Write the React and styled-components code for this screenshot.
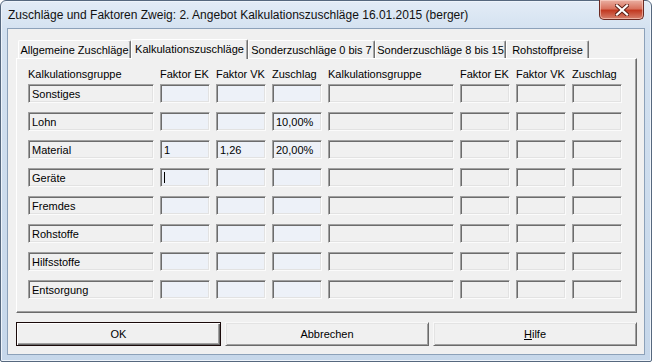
import React from 'react';
import styled, { createGlobalStyle } from 'styled-components';

const Global = createGlobalStyle`
  html, body {
    margin: 0;
    padding: 0;
    background: #ffffff;
  }
  body {
    font-family: "Liberation Sans", Arial, sans-serif;
    font-size: 11px;
    color: #000;
  }
`;

const Window = styled.div`
  position: relative;
  box-sizing: border-box;
  width: 652px;
  height: 362px;
  display: flex;
  flex-direction: column;
  padding: 0 6px 6px 6px;
  border: 1px solid #56687e;
  border-radius: 6px 6px 2px 2px;
  background: linear-gradient(180deg, #e3ecf6 0px, #d3e1f0 30px, #c6d7ea 100%);
  box-shadow: inset 0 0 0 1px #eef4fb;
`;

const TitleBar = styled.div`
  height: 27px;
  display: flex;
  align-items: center;
  padding-left: 1px;
  padding-top: 1px;
  box-sizing: border-box;
  font-family: "Liberation Sans", Arial, sans-serif;
  font-size: 12px;
  color: #111;
`;

const CloseButton = styled.div`
  position: absolute;
  top: -1px;
  right: 7px;
  width: 45px;
  height: 20px;
  box-sizing: border-box;
  border: 1px solid #6b2a22;
  border-top: none;
  border-radius: 0 0 5px 5px;
  background: linear-gradient(180deg, #eab0a3 0%, #d9735f 45%, #c23a22 55%, #d6806c 100%);
  box-shadow: inset 0 0 0 1px rgba(255, 220, 210, 0.55);
  display: flex;
  align-items: center;
  justify-content: center;
`;

const Client = styled.div`
  flex: 1;
  display: flex;
  flex-direction: column;
  border: 1px solid #8ca1b9;
  background: #f0f0f0;
  padding: 9px 7px 6px 8px;
`;

const TabStrip = styled.div`
  height: 20px;
  display: flex;
  align-items: flex-end;
  padding-left: 2px;
  position: relative;
  z-index: 1;
`;

const Tab = styled.div`
  box-sizing: border-box;
  width: ${p => p.$w}px;
  height: ${p => (p.$active ? 20 : 18)}px;
  display: flex;
  align-items: center;
  justify-content: center;
  padding-bottom: ${p => (p.$active ? 2 : 0)}px;
  background: #f0f0f0;
  border-top: 1px solid #ffffff;
  border-left: 1px solid #ffffff;
  border-right: 1px solid #707070;
  box-shadow: inset -1px 0 0 #a8a8a8;
  border-radius: 2px 2px 0 0;
  margin-bottom: ${p => (p.$active ? -1 : 0)}px;
  white-space: nowrap;
`;

const Panel = styled.div`
  box-sizing: border-box;
  height: 255px;
  border-top: 1px solid #ffffff;
  border-left: 1px solid #ffffff;
  border-right: 1px solid #6a6a6a;
  border-bottom: 1px solid #6a6a6a;
  box-shadow: inset -1px -1px 0 #a0a0a0;
  padding: 10px 0 0 11px;
`;

const Grid = styled.div`
  display: grid;
  grid-template-columns: 126px 50px 50px 50px 126px 50px 50px 50px;
  grid-template-rows: 15px;
  grid-auto-rows: 28px;
  column-gap: 6px;
`;

const Header = styled.div`
  align-self: start;
  margin-top: -1px;
  white-space: nowrap;
`;

const Field = styled.div`
  box-sizing: border-box;
  height: 19px;
  display: flex;
  align-items: center;
  padding-left: 3px;
  background: ${p => (p.$edit ? '#edf1f8' : '#f0f0f0')};
  border-top: 1px solid #a0a0a0;
  border-left: 1px solid #a0a0a0;
  border-right: 1px solid #fbfbfb;
  border-bottom: 1px solid #fbfbfb;
  box-shadow: inset 1px 1px 0 #6c6c6c, inset -1px -1px 0 #e2e2e2;
  white-space: nowrap;
`;

const Caret = styled.span`
  display: inline-block;
  width: 1px;
  height: 11px;
  background: #000;
`;

const ButtonRow = styled.div`
  margin-top: 9px;
  display: grid;
  grid-template-columns: 205px 204px 204px;
  column-gap: 4px;
  height: 24px;
`;

const Button = styled.div`
  box-sizing: border-box;
  display: flex;
  align-items: center;
  justify-content: center;
  background: #f0f0f0;
  border: 1px solid;
  border-color: ${p => (p.$default ? '#1a0a0a' : '#f8f8f8 #6a6a6a #6a6a6a #f8f8f8')};
  box-shadow: ${p =>
    p.$default
      ? 'inset 1px 1px 0 #ffffff, inset -1px -1px 0 #6a6a6a, inset -2px -2px 0 #a0a0a0'
      : 'inset 1px 1px 0 #e3e3e3, inset -1px -1px 0 #a0a0a0'};
`;

const Underline = styled.span`
  text-decoration: underline;
`;

const tabs = [
  { label: 'Allgemeine Zuschläge', w: 113 },
  { label: 'Kalkulationszuschläge', w: 117, active: true },
  { label: 'Sonderzuschläge 0 bis 7', w: 127 },
  { label: 'Sonderzuschläge 8 bis 15', w: 131 },
  { label: 'Rohstoffpreise', w: 83 },
];

const headers = ['Kalkulationsgruppe', 'Faktor EK', 'Faktor VK', 'Zuschlag'];

const rows = [
  { name: 'Sonstiges', ek: '', vk: '', z: '' },
  { name: 'Lohn', ek: '', vk: '', z: '10,00%' },
  { name: 'Material', ek: '1', vk: '1,26', z: '20,00%' },
  { name: 'Geräte', ek: '', vk: '', z: '', caret: true },
  { name: 'Fremdes', ek: '', vk: '', z: '' },
  { name: 'Rohstoffe', ek: '', vk: '', z: '' },
  { name: 'Hilfsstoffe', ek: '', vk: '', z: '' },
  { name: 'Entsorgung', ek: '', vk: '', z: '' },
];

const CloseIcon = () => (
  <svg width="14" height="12" viewBox="0 0 14 12">
    <path d="M2 1.5 L12 10.5 M12 1.5 L2 10.5" stroke="#5a1d14" strokeWidth="4" strokeLinecap="square" />
    <path d="M2 1.5 L12 10.5 M12 1.5 L2 10.5" stroke="#ffffff" strokeWidth="2.2" strokeLinecap="square" />
  </svg>
);

export default function App() {
  return (
    <>
      <Global />
      <Window>
        <TitleBar>Zuschläge und Faktoren Zweig: 2. Angebot Kalkulationszuschläge 16.01.2015 (berger)</TitleBar>
        <CloseButton>
          <CloseIcon />
        </CloseButton>
        <Client>
          <TabStrip>
            {tabs.map(t => (
              <Tab key={t.label} $w={t.w} $active={t.active}>
                {t.label}
              </Tab>
            ))}
          </TabStrip>
          <Panel>
            <Grid>
              {[...headers, ...headers].map((h, i) => (
                <Header key={i}>{h}</Header>
              ))}
              {rows.map(r => (
                <React.Fragment key={r.name}>
                  <Field>{r.name}</Field>
                  <Field $edit>{r.caret ? <Caret /> : r.ek}</Field>
                  <Field $edit>{r.vk}</Field>
                  <Field $edit>{r.z}</Field>
                  <Field />
                  <Field />
                  <Field />
                  <Field />
                </React.Fragment>
              ))}
            </Grid>
          </Panel>
          <ButtonRow>
            <Button $default>OK</Button>
            <Button>Abbrechen</Button>
            <Button>
              <span>
                <Underline>H</Underline>ilfe
              </span>
            </Button>
          </ButtonRow>
        </Client>
      </Window>
    </>
  );
}
